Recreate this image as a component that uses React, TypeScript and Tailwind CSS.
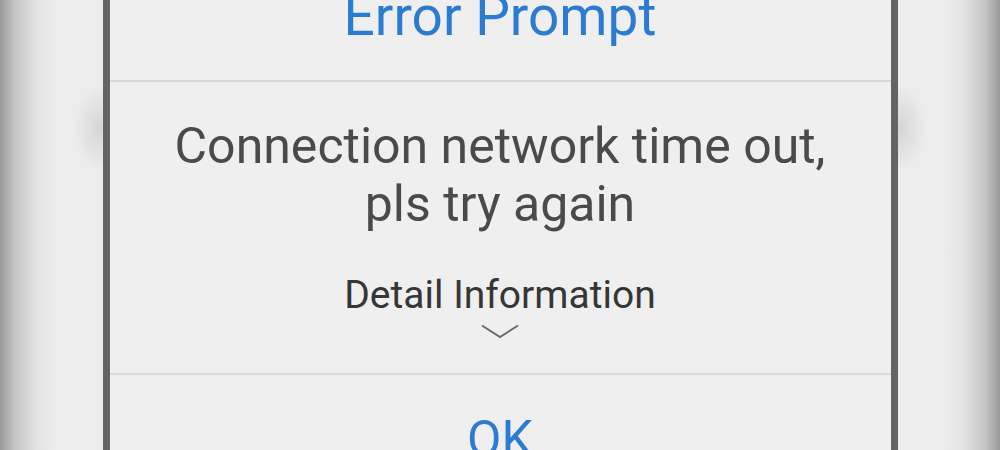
export default function App() {
  return (
    <div
      className="w-[1000px] h-[450px] overflow-hidden flex justify-center bg-[#ededed] bg-[radial-gradient(ellipse_26px_44px_at_100px_128px,rgba(0,0,0,0.1),transparent),radial-gradient(ellipse_26px_44px_at_900px_128px,rgba(0,0,0,0.1),transparent),linear-gradient(to_right,#9a9a9a_0px,#c4c4c4_15px,#e2e2e2_35px,#ededed_55px,#ededed_945px,#e2e2e2_965px,#c4c4c4_985px,#9a9a9a_1000px)]"
      style={{ fontFamily: "Roboto, 'Noto Sans', sans-serif" }}
    >
      <div className="w-[795px] h-full flex flex-col bg-[#efefef] border-x-[7px] border-[#646464]">
        <div className="h-[82px] shrink-0 flex justify-center border-b-2 border-[#d8d8d8]">
          <div className="-mt-[11px] text-[55px] leading-[55px] text-[#2c7bd2]">
            Error Prompt
          </div>
        </div>

        <div className="h-[291px] shrink-0 flex flex-col items-center pt-[35px]">
          <p className="text-[50px] leading-[58px] text-[#4a4a4a] text-center">
            Connection network time out,
            <br />
            pls try again
          </p>
          <p className="mt-[40px] text-[39px] leading-[44px] text-[#363636]">
            Detail Information
          </p>
          <svg width="38" height="15" viewBox="0 0 38 15" className="mt-[7px]">
            <path d="M1 1.5 L19 13 L37 1.5" fill="none" stroke="#6a6a6a" strokeWidth="2" />
          </svg>
        </div>

        <div className="shrink-0 border-t-2 border-[#d8d8d8] flex justify-center pt-[39px]">
          <div className="text-[50px] leading-[50px] text-[#2c7bd2]">OK</div>
        </div>
      </div>
    </div>
  );
}
